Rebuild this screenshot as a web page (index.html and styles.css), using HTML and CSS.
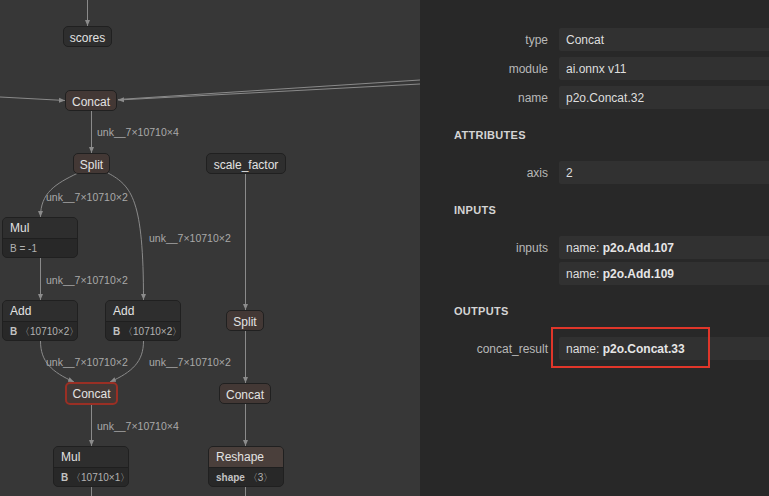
FILE: index.html
```html
<!DOCTYPE html>
<html>
<head>
<meta charset="utf-8">
<link rel="stylesheet" href="styles.css">
</head>
<body>
<div class="app">
  <div class="canvas">
    <svg class="edges" width="420" height="496" viewBox="0 0 420 496">
      <defs>
        <marker id="arr" viewBox="0 0 6 6" refX="6" refY="3" markerWidth="6" markerHeight="6" orient="auto" markerUnits="userSpaceOnUse">
          <path d="M0,0.5 L6,3 L0,5.5 Z" fill="#8c8c8c"/>
        </marker>
      </defs>
      <g class="lines">
        <path d="M87.5 0 V26" marker-end="url(#arr)"/>
        <path d="M0 97 L65 100.5" marker-end="url(#arr)"/>
        <path d="M420 80 L118 99.5"/>
        <path d="M420 84 L118 100" marker-end="url(#arr)"/>
        <path d="M91.5 111 V153" marker-end="url(#arr)"/>
        <path d="M78 173 C 55 184, 40.5 193, 40.5 217" marker-end="url(#arr)"/>
        <path d="M108 173 C 132 186, 143.5 200, 143.5 300" marker-end="url(#arr)"/>
        <path d="M245.5 174 V310" marker-end="url(#arr)"/>
        <path d="M40.5 258 V300" marker-end="url(#arr)"/>
        <path d="M40.5 341 C 40.5 362, 52 372, 74 382" marker-end="url(#arr)"/>
        <path d="M143.5 341 C 143.5 362, 132 372, 110 382" marker-end="url(#arr)"/>
        <path d="M245.5 331 V383" marker-end="url(#arr)"/>
        <path d="M91.5 405 V446" marker-end="url(#arr)"/>
        <path d="M245.5 404 V446" marker-end="url(#arr)"/>
        <path d="M91.5 487 V496"/>
        <path d="M245.5 486 V496"/>
      </g>
      <g class="labels">
        <text x="97" y="136">unk__7×10710×4</text>
        <text x="46" y="201">unk__7×10710×2</text>
        <text x="149" y="242">unk__7×10710×2</text>
        <text x="46" y="284">unk__7×10710×2</text>
        <text x="46" y="366">unk__7×10710×2</text>
        <text x="149" y="366">unk__7×10710×2</text>
        <text x="97" y="430">unk__7×10710×4</text>
      </g>
    </svg>

    <div class="node io" style="left:63px;top:26px;width:49px">scores</div>
    <div class="node op" style="left:65px;top:90px;width:52px">Concat</div>
    <div class="node op" style="left:73px;top:153px;width:37px">Split</div>
    <div class="node io" style="left:206px;top:153px;width:80px">scale_factor</div>

    <div class="node box" style="left:2px;top:217px">
      <div class="title">Mul</div>
      <div class="attr">B = -1</div>
    </div>
    <div class="node box" style="left:2px;top:300px">
      <div class="title">Add</div>
      <div class="attr"><b>B</b> 〈10710×2〉</div>
    </div>
    <div class="node box" style="left:105px;top:300px">
      <div class="title">Add</div>
      <div class="attr"><b>B</b> 〈10710×2〉</div>
    </div>
    <div class="node op" style="left:226px;top:310px;width:38px">Split</div>
    <div class="node op selected" style="left:65px;top:382px;width:53px">Concat</div>
    <div class="node op" style="left:219px;top:383px;width:52px">Concat</div>
    <div class="node box" style="left:53px;top:446px">
      <div class="title">Mul</div>
      <div class="attr"><b>B</b> 〈10710×1〉</div>
    </div>
    <div class="node box reshape" style="left:208px;top:446px">
      <div class="title">Reshape</div>
      <div class="attr"><b>shape</b> 〈3〉</div>
    </div>
  </div>

  <div class="panel">
    <div class="grid">
      <div class="label">type</div><div class="value">Concat</div>
      <div class="label">module</div><div class="value">ai.onnx v11</div>
      <div class="label">name</div><div class="value">p2o.Concat.32</div>
    </div>
    <div class="header">ATTRIBUTES</div>
    <div class="grid">
      <div class="label">axis</div><div class="value">2</div>
    </div>
    <div class="header">INPUTS</div>
    <div class="grid">
      <div class="label">inputs</div>
      <div class="list">
        <div class="value">name: <b>p2o.Add.107</b></div>
        <div class="value">name: <b>p2o.Add.109</b></div>
      </div>
    </div>
    <div class="header">OUTPUTS</div>
    <div class="grid">
      <div class="label">concat_result</div>
      <div class="value mark">name: <b>p2o.Concat.33</b><span class="highlight"></span></div>
    </div>
  </div>
</div>
</body>
</html>
```

FILE: styles.css
```css
* { box-sizing: border-box; }
html, body {
  margin: 0;
  padding: 0;
  width: 769px;
  height: 496px;
  overflow: hidden;
  background: #282828;
  font-family: "Liberation Sans", Arial, sans-serif;
}
.app {
  display: flex;
  width: 769px;
  height: 496px;
}
.canvas {
  position: relative;
  width: 420px;
  height: 496px;
  flex: none;
  background: #373737;
  overflow: hidden;
}
.edges {
  position: absolute;
  left: 0;
  top: 0;
}
.lines path {
  fill: none;
  stroke: #8a8a8a;
  stroke-width: 1;
}
.labels text {
  font-family: "Liberation Sans", Arial, sans-serif;
  font-size: 10.5px;
  fill: #a9a9a9;
}
.node {
  position: absolute;
  height: 21px;
  border-radius: 5px;
  border: 1px solid #202020;
  color: #e2e2e2;
  font-size: 12px;
  line-height: 20px;
  padding-top: 1px;
  text-align: center;
  white-space: nowrap;
}
.node.io {
  background: #2e2e2e;
}
.node.op {
  background: #433835;
}
.node.op.selected {
  height: 23px;
  line-height: 18px;
  border: 2px solid #9a2f24;
}
.node.box {
  width: 76px;
  height: 41px;
  padding-top: 0;
  background: #282828;
  text-align: left;
  overflow: hidden;
  display: flex;
  flex-direction: column;
}
.node.box .title {
  height: 21px;
  padding-left: 7px;
  line-height: 21px;
  background: #2e2e2e;
  border-bottom: 1px solid #1f1f1f;
}
.node.box .attr {
  flex: 1;
  padding-left: 7px;
  font-size: 10px;
  line-height: 20px;
  color: #b2b2b2;
}
.node.box .attr b {
  font-weight: bold;
  color: #c2c2c2;
}
.node.reshape .title {
  background: #4a3f3b;
}

.panel {
  flex: 1;
  padding-top: 28px;
  color: #dcdcdc;
  font-size: 12px;
}
.grid {
  display: grid;
  grid-template-columns: 128px 1fr;
  column-gap: 11px;
  row-gap: 6px;
}
.label {
  text-align: right;
  color: #b8b8b8;
  line-height: 24px;
  height: 23px;
  white-space: nowrap;
}
.list {
  display: flex;
  flex-direction: column;
  gap: 3px;
}
.value {
  position: relative;
  height: 23px;
  line-height: 24px;
  padding-left: 7px;
  background: #313131;
  border-radius: 2px 0 0 2px;
  color: #dedede;
  white-space: nowrap;
}
.value b {
  font-weight: bold;
  color: #e6e6e6;
}
.header {
  padding-left: 34px;
  margin: 18px 0 18px;
  height: 16px;
  line-height: 16px;
  font-size: 11px;
  font-weight: bold;
  letter-spacing: 0.3px;
  color: #d4d4d4;
}
.highlight {
  position: absolute;
  left: -8px;
  top: -10px;
  width: 159px;
  height: 41px;
  border: 2px solid #e0362a;
}
```
